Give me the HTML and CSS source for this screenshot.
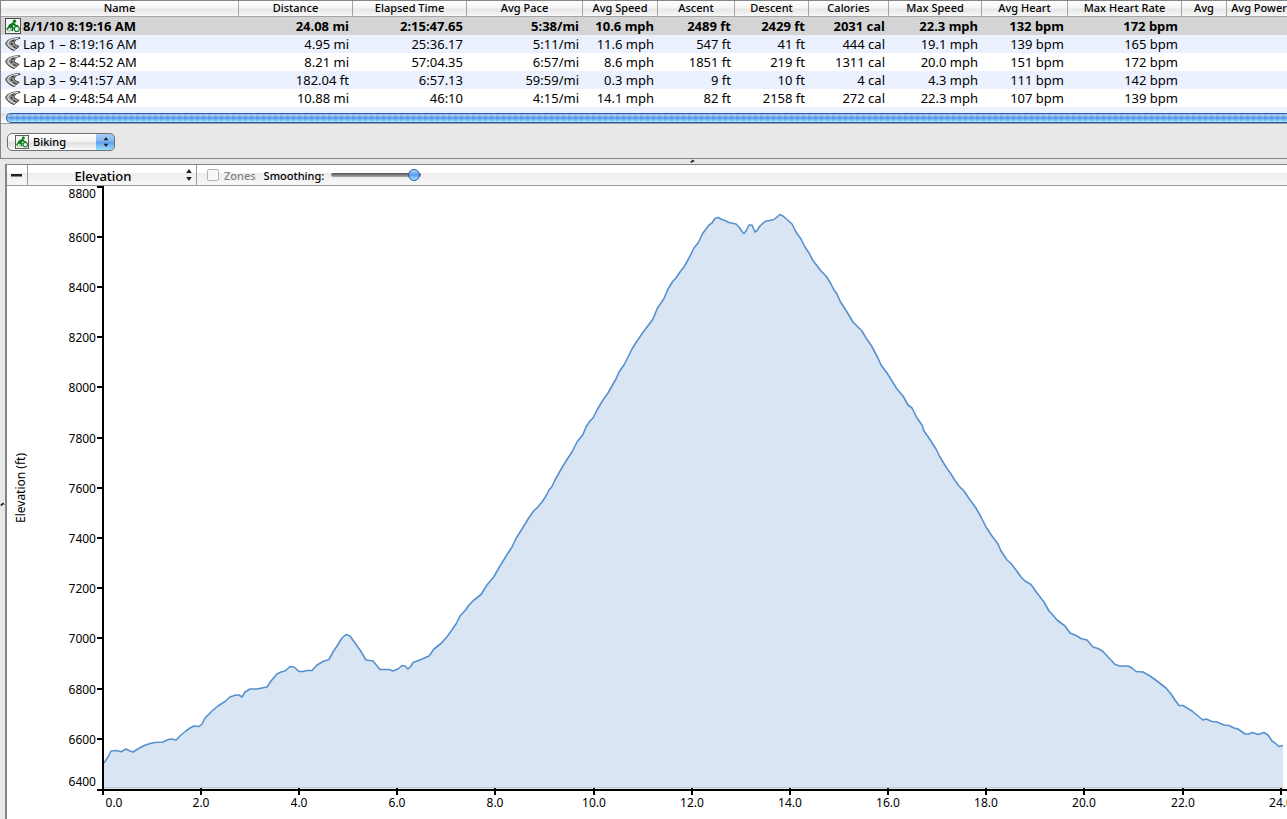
FILE: index.html
```html
<!DOCTYPE html>
<html lang="en">
<head>
<meta charset="utf-8">
<title>Activity – Elevation</title>
<link rel="stylesheet" href="styles.css">
</head>
<body>
<svg class="defs" aria-hidden="true">
  <symbol id="bike" viewBox="0 0 16 16">
    <rect x=".5" y=".5" width="15" height="15" fill="#f4f6f4" stroke="#4b4b4b"/>
    <circle cx="3.800" cy="11.200" r="2" fill="none" stroke="#7fba86"/>
    <circle cx="11.800" cy="11" r="2.500" fill="none" stroke="#167a24" stroke-width="1.200"/>
    <circle cx="9.500" cy="3.300" r="1.700" fill="#0d7a1c"/>
    <path d="M8 5.500 4.500 8.200M9 5.800l1.500 2 2 .2" fill="none" stroke="#0d7a1c" stroke-width="1.800" stroke-linecap="round"/>
    <path d="M8.300 4.500 4 6.500 3 9.200 7 9.500 9.200 6.500z" fill="#0d7a1c"/>
    <path d="M4.500 8.500 8 9.800 7 13M4 9l-2 2.500" fill="none" stroke="#0d7a1c" stroke-width="1.700"/>
  </symbol>
  <symbol id="road" viewBox="0 0 17 16">
    <path d="M16 1.500C10 1 3 3 1 6.500 0 9 4 13 9.500 15L15 10.500C11 9 9.500 7.500 10 6c.5-2 3-3.500 6-4z" fill="#8d8d8d" stroke="#3c3c3c"/>
    <path d="M14 2C8 2 3 4.500 3 7c0 2.200 4 5 8 6.800" fill="none" stroke="#dedede" stroke-width="1.200"/>
    <path d="M9.500 3.800 7 5.300M6.500 7l1.200 2M9 10.500l2 1.500" fill="none" stroke="#222" stroke-width="1.200"/>
  </symbol>
  <symbol id="updown" viewBox="0 0 6 12">
    <path d="M3 0 5.800 4H.2zM3 12 .2 8h5.600z" fill="#1c1c1c"/>
  </symbol>
</svg>

<section class="activity">
  <div class="table-view">
    <table class="laps">
      <colgroup><col class="c-name"><col class="c-114"><col class="c-114"><col class="c-pace"><col class="c-speed"><col class="c-ascent"><col class="c-descent"><col class="c-cal"><col class="c-max"><col class="c-heart"><col class="c-114"><col class="c-avg"><col class="c-power"></colgroup>
      <thead>
        <tr><th>Name</th><th>Distance</th><th>Elapsed Time</th><th>Avg Pace</th><th>Avg Speed</th><th>Ascent</th><th>Descent</th><th>Calories</th><th>Max Speed</th><th>Avg Heart</th><th>Max Heart Rate</th><th>Avg</th><th>Avg Power</th></tr>
      </thead>
      <tbody>
        <tr class="selected"><td><span class="name"><svg class="icon"><use href="#bike"/></svg>8/1/10 8:19:16 AM</span></td><td>24.08 mi</td><td>2:15:47.65</td><td>5:38/mi</td><td>10.6 mph</td><td>2489 ft</td><td>2429 ft</td><td>2031 cal</td><td>22.3 mph</td><td>132 bpm</td><td>172 bpm</td><td></td><td></td></tr>
        <tr><td><span class="name"><svg class="icon"><use href="#road"/></svg>Lap 1 – 8:19:16 AM</span></td><td>4.95 mi</td><td>25:36.17</td><td>5:11/mi</td><td>11.6 mph</td><td>547 ft</td><td>41 ft</td><td>444 cal</td><td>19.1 mph</td><td>139 bpm</td><td>165 bpm</td><td></td><td></td></tr>
        <tr><td><span class="name"><svg class="icon"><use href="#road"/></svg>Lap 2 – 8:44:52 AM</span></td><td>8.21 mi</td><td>57:04.35</td><td>6:57/mi</td><td>8.6 mph</td><td>1851 ft</td><td>219 ft</td><td>1311 cal</td><td>20.0 mph</td><td>151 bpm</td><td>172 bpm</td><td></td><td></td></tr>
        <tr><td><span class="name"><svg class="icon"><use href="#road"/></svg>Lap 3 – 9:41:57 AM</span></td><td>182.04 ft</td><td>6:57.13</td><td>59:59/mi</td><td>0.3 mph</td><td>9 ft</td><td>10 ft</td><td>4 cal</td><td>4.3 mph</td><td>111 bpm</td><td>142 bpm</td><td></td><td></td></tr>
        <tr><td><span class="name"><svg class="icon"><use href="#road"/></svg>Lap 4 – 9:48:54 AM</span></td><td>10.88 mi</td><td>46:10</td><td>4:15/mi</td><td>14.1 mph</td><td>82 ft</td><td>2158 ft</td><td>272 cal</td><td>22.3 mph</td><td>107 bpm</td><td>139 bpm</td><td></td><td></td></tr>
      </tbody>
    </table>
    <div class="blank-row"></div>
    <div class="scrollbar"><div class="scroll-thumb"></div></div>
  </div>
  <div class="sport-bar">
    <div class="popup">
      <select class="popup-select" aria-label="Activity type"><option>Biking</option></select>
      <svg class="popup-icon"><use href="#bike"/></svg>
      <svg class="popup-arrows"><use href="#updown"/></svg>
    </div>
  </div>
</section>

<div class="splitter"><svg class="grip" viewBox="0 0 5 4"><path d="M0 3 3 .5 5 2.500H3L2 4z" fill="#222"/></svg></div>

<div class="lower">
  <div class="side-splitter"><svg class="grip" viewBox="0 0 5 4"><path d="M0 3 3 .5 5 2.500H3L2 4z" fill="#222"/></svg></div>
  <section class="chart-panel">
    <div class="toolbar">
      <button class="collapse" aria-label="Collapse"><span class="minus"></span></button>
      <div class="metric">
        <select class="metric-select" aria-label="Metric"><option>Elevation</option></select>
        <svg class="metric-arrows"><use href="#updown"/></svg>
      </div>
      <div class="options">
        <label class="zones"><input class="check" type="checkbox" disabled>Zones</label>
        <label class="smoothing">Smoothing:<input class="slider" type="range" min="0" max="100" value="98"></label>
      </div>
    </div>
    <svg class="chart" viewBox="7 186 1280 633" role="img" aria-label="Elevation in feet by distance">
      <path class="area" d="M104 789V763L106 760 108 757 111 751 116 750.500 121 751.700 126 749 130 751 133 752 137 749.500 143 746 150 743.500 155 742.500 163 742 167 740 171 739 176 740 181 735 186 731 190 728 194 726 199 726.500 202 724 205 718 212 711 218 706 225 701.500 230 697 236 695 239 695 242 697 245 692 250 689 257 689 267 687 271 681 277 674 281 672 285 671 290 666.500 294 667 299 671.500 303 671.500 307 670.500 312 670.500 317 665 323 661.500 329 659.500 333 652 337 646 342 638 346 634.500 350 636 355 643 360 650 366 660 373 661 380 669.500 389 669.500 393 671 398 669 402 665.500 405 666 408 669 411 666 413 662.500 421 659.500 429 656 434 649 441 643.500 448 635.500 456 624 460 616 466 609.500 469 605 474 600 481 594.500 487 585 494 576.500 500 566 508 553 512 547 516 538.500 522 529 529 517.500 534 510.500 537 508 542 502 546 496 549 490 552 486.500 555 480 559 473 563 466 568 458 572 452 577 442 583 434.500 586 427 590 421 593 418 597 410 603 400 608 393 616 379 619 372 624 365 629 355 632 349 637 341 644 331 653 319 657 309 664 298.500 668 289 673 281 676 278 680 272 684 267 689 258 694 248 698 243 703 233 709 225 712 223 715 218.500 718 217.500 722 219.500 725 220.500 729 222.500 736 224 739 227 742 231.500 744 233.500 746 231 749 225 752 225 755 232 757 230.500 760 226 765 221.500 774 219.500 777 217 780 214.500 783 216 787 219.500 792 224 796 232 801 239 805 247 809 253 813 260.500 821 271 826 276 831 284 834 290 837 294 840 301 847 312 853 322 862 331 866 338 871 345 878 358 881 365 887 373 897 389 903 396 908 405 912 408 917 418 922 425 924 431 929 438 936 449 940 457 946 467 951 474 954 479 959 486 964 491 970 500 976 508 981 517 986 527 992 536 998 544 1001 551 1007 560 1011 563.500 1016 570 1021 577 1025 581 1031 584.500 1037 593 1044 602 1049 611 1052 614 1057 620 1065 626 1070 633 1076 635.500 1081 638.500 1087 640 1093 647 1098 648.500 1103 651.500 1108 657 1111 660 1115 664.500 1120 666 1128 666 1132 668 1136 671.500 1143 672 1150 676 1157 681 1166 688 1171 694 1175 700 1179 705.500 1183 705.500 1187 708 1192 711 1198 716 1203 720 1206 719 1212 721.500 1217 722 1224 725 1229 725.500 1234 728 1238 729 1245 734 1249 734 1252 732.500 1258 734.500 1264 732.500 1268 735 1272 741 1275 743 1279 746.500 1283 745.500V789z"/>
      <path class="line" d="M104 763L106 760 108 757 111 751 116 750.500 121 751.700 126 749 130 751 133 752 137 749.500 143 746 150 743.500 155 742.500 163 742 167 740 171 739 176 740 181 735 186 731 190 728 194 726 199 726.500 202 724 205 718 212 711 218 706 225 701.500 230 697 236 695 239 695 242 697 245 692 250 689 257 689 267 687 271 681 277 674 281 672 285 671 290 666.500 294 667 299 671.500 303 671.500 307 670.500 312 670.500 317 665 323 661.500 329 659.500 333 652 337 646 342 638 346 634.500 350 636 355 643 360 650 366 660 373 661 380 669.500 389 669.500 393 671 398 669 402 665.500 405 666 408 669 411 666 413 662.500 421 659.500 429 656 434 649 441 643.500 448 635.500 456 624 460 616 466 609.500 469 605 474 600 481 594.500 487 585 494 576.500 500 566 508 553 512 547 516 538.500 522 529 529 517.500 534 510.500 537 508 542 502 546 496 549 490 552 486.500 555 480 559 473 563 466 568 458 572 452 577 442 583 434.500 586 427 590 421 593 418 597 410 603 400 608 393 616 379 619 372 624 365 629 355 632 349 637 341 644 331 653 319 657 309 664 298.500 668 289 673 281 676 278 680 272 684 267 689 258 694 248 698 243 703 233 709 225 712 223 715 218.500 718 217.500 722 219.500 725 220.500 729 222.500 736 224 739 227 742 231.500 744 233.500 746 231 749 225 752 225 755 232 757 230.500 760 226 765 221.500 774 219.500 777 217 780 214.500 783 216 787 219.500 792 224 796 232 801 239 805 247 809 253 813 260.500 821 271 826 276 831 284 834 290 837 294 840 301 847 312 853 322 862 331 866 338 871 345 878 358 881 365 887 373 897 389 903 396 908 405 912 408 917 418 922 425 924 431 929 438 936 449 940 457 946 467 951 474 954 479 959 486 964 491 970 500 976 508 981 517 986 527 992 536 998 544 1001 551 1007 560 1011 563.500 1016 570 1021 577 1025 581 1031 584.500 1037 593 1044 602 1049 611 1052 614 1057 620 1065 626 1070 633 1076 635.500 1081 638.500 1087 640 1093 647 1098 648.500 1103 651.500 1108 657 1111 660 1115 664.500 1120 666 1128 666 1132 668 1136 671.500 1143 672 1150 676 1157 681 1166 688 1171 694 1175 700 1179 705.500 1183 705.500 1187 708 1192 711 1198 716 1203 720 1206 719 1212 721.500 1217 722 1224 725 1229 725.500 1234 728 1238 729 1245 734 1249 734 1252 732.500 1258 734.500 1264 732.500 1268 735 1272 741 1275 743 1279 746.500 1283 745.500"/>
      <path class="baseline" d="M104 787.500H1283"/>
      <path class="axis" d="M103 186V795M97 790H1287"/>
      <path class="ticks" d="M97 187H103M97 237H103M97 287H103M97 337H103M97 387H103M97 438H103M97 488H103M97 538H103M97 588H103M97 638H103M97 689H103M97 739H103M201 788V795M299 788V795M397 788V795M495 788V795M594 788V795M692 788V795M790 788V795M888 788V795M986 788V795M1084 788V795M1183 788V795M1281 788V795"/>
      <g class="y-labels">
        <text x="96" y="198">8800</text><text x="96" y="242">8600</text><text x="96" y="292">8400</text><text x="96" y="342">8200</text><text x="96" y="392">8000</text><text x="96" y="443">7800</text><text x="96" y="493">7600</text><text x="96" y="543">7400</text><text x="96" y="593">7200</text><text x="96" y="643">7000</text><text x="96" y="694">6800</text><text x="96" y="744">6600</text><text x="96" y="786">6400</text>
      </g>
      <g class="x-labels">
        <text x="114" y="807">0.0</text><text x="201" y="807">2.0</text><text x="299" y="807">4.0</text><text x="397" y="807">6.0</text><text x="495" y="807">8.0</text><text x="594" y="807">10.0</text><text x="692" y="807">12.0</text><text x="790" y="807">14.0</text><text x="888" y="807">16.0</text><text x="986" y="807">18.0</text><text x="1084" y="807">20.0</text><text x="1183" y="807">22.0</text><text x="1281" y="807">24.0</text>
        <text transform="translate(25 488) rotate(-90)">Elevation (ft)</text>
      </g>
    </svg>
  </section>
</div>
</body>
</html>
```
FILE: styles.css
```css
* { box-sizing: border-box; }
body {
  margin: 0;
  overflow: hidden;
  background: #e8e8e8;
  color: #000;
  font-family: "Noto Sans", "Open Sans", sans-serif;
  font-size: 13px;
}
svg { display: block; }
.defs { position: absolute; width: 0; height: 0; }

.activity {
  border: 1px solid #858585;
  border-right: 0;
}
.table-view { overflow: hidden; background: #fff; }
.laps {
  width: 100%;
  min-width: 1291px;
  table-layout: fixed;
  border-collapse: separate;
  border-spacing: 0;
}
.c-name { width: 238px; }
.c-114 { width: 114px; }
.c-pace { width: 116px; }
.c-speed { width: 75px; }
.c-ascent { width: 77px; }
.c-descent { width: 74px; }
.c-cal { width: 80px; }
.c-max { width: 93px; }
.c-heart { width: 86px; }
.c-avg { width: 45px; }
.c-power { width: auto; }
.laps th {
  height: 16px;
  padding: 0 0 2px;
  border-right: 1px solid #a5a5a5;
  border-bottom: 1px solid #a5a5a5;
  background: linear-gradient(#fff 0%, #f6f6f6 45%, #e6e6e6 55%, #f8f8f8 100%);
  font-size: 11px;
  font-weight: 500;
  line-height: 13px;
  white-space: nowrap;
}
.laps td {
  height: 18px;
  padding: 0 4px 0 0;
  line-height: 18px;
  text-align: right;
  white-space: nowrap;
}
.laps tbody tr:nth-child(even) { background: #ebf1fe; }
.laps .selected { background: #d4d4d4; font-weight: 700; }
.name { display: flex; align-items: center; gap: 2px; padding-left: 4px; }
.icon { width: 16px; height: 16px; }
.blank-row { height: 6px; background: #ebf1fe; }
.scrollbar {
  height: 10px;
  padding-left: 5px;
  background: linear-gradient(#ddd, #fff);
}
.scroll-thumb {
  height: 10px;
  border: 1px solid #2a5caa;
  border-right: 0;
  border-radius: 5px 0 0 5px;
  background:
    repeating-linear-gradient(90deg, rgba(255, 255, 255, .1) 0 3px, rgba(0, 60, 160, .06) 3px 6px),
    linear-gradient(#8fb8ec 0%, #a5c8f4 20%, #5796e6 45%, #69b1f5 65%, #a6ecff 100%);
}
.sport-bar {
  padding: 9px 6px 7px;
  border-top: 1px solid #9c9c9c;
}
.popup { position: relative; width: 108px; }
.popup-select {
  display: block;
  width: 100%;
  height: 18px;
  padding: 0 20px 0 25px;
  appearance: none;
  border: 1px solid #6f6f6f;
  border-radius: 5px;
  background:
    linear-gradient(#a9cdf5 0%, #82b5ef 45%, #5ba0ec 50%, #9be0fd 100%) right / 18px 100% no-repeat,
    linear-gradient(#fff 0%, #f3f3f3 45%, #dfdfdf 55%, #fafafa 100%);
  color: #000;
  font: 500 11px/16px "Noto Sans", "Open Sans", sans-serif;
}
.popup-icon { position: absolute; left: 8px; top: 2px; width: 14px; height: 14px; }
.popup-arrows { position: absolute; right: 6px; top: 4px; width: 6px; height: 10px; pointer-events: none; }

.splitter { display: flex; justify-content: center; height: 5px; padding-left: 98px; }
.grip { width: 5px; height: 4px; }
.lower { display: flex; }
.side-splitter { display: flex; align-items: center; width: 5px; padding-top: 24px; }
.chart-panel {
  flex: 1;
  min-width: 0;
  border-top: 1px solid #858585;
  border-left: 2px solid #858585;
  background: #fff;
}
.toolbar {
  display: flex;
  height: 21px;
  border-bottom: 1px solid #999;
  background: linear-gradient(#fff 0 8px, #ececec 8px, #f8f8f8 100%);
}
.collapse {
  display: flex;
  align-items: center;
  justify-content: center;
  width: 21px;
  padding: 0 1px 0 0;
  border: 0;
  border-right: 1px solid #999;
  background: none;
}
.minus { width: 11px; height: 3px; background: #222; border-bottom: 1px solid #888; }
.metric { position: relative; width: 169px; border-right: 1px solid #999; }
.metric-select {
  width: 100%;
  height: 20px;
  padding: 2px 18px 0 0;
  appearance: none;
  border: 0;
  background: none;
  color: #000;
  font: 500 13px/18px "Noto Sans", "Open Sans", sans-serif;
  text-align-last: center;
}
.metric-arrows { position: absolute; right: 4px; top: 4px; width: 6px; height: 12px; pointer-events: none; }
.options { display: flex; align-items: center; gap: 8px; padding-left: 10px; font-size: 11px; font-weight: 500; }
.zones, .smoothing { display: flex; align-items: center; }
.zones { gap: 5px; color: #808080; }
.smoothing { gap: 7px; }
.check {
  width: 12px;
  height: 12px;
  margin: 0;
  appearance: none;
  border: 1px solid #b4b4b4;
  border-radius: 2px;
  background: #f7f7f7;
}
.slider { width: 90px; height: 14px; margin: 0; appearance: none; background: none; }
.slider::-webkit-slider-runnable-track {
  height: 4px;
  border-radius: 2px;
  background: linear-gradient(#555, #aaa);
}
.slider::-webkit-slider-thumb {
  width: 12px;
  height: 12px;
  margin-top: -4px;
  appearance: none;
  border: 1px solid #2c5aa0;
  border-radius: 50%;
  background: linear-gradient(#b5d4f8, #5a9cf0 50%, #a8e4ff);
}

.chart { width: 100%; height: auto; }
.area { fill: #dae5f3; }
.line { fill: none; stroke: #5691cf; stroke-width: 1.6px; stroke-linejoin: round; }
.baseline { fill: none; stroke: #c5c9d0; }
.axis { fill: none; stroke: #000; stroke-width: 2px; }
.ticks { fill: none; stroke: #000; stroke-width: 2px; }
.y-labels, .x-labels { font-size: 12px; }
.y-labels { text-anchor: end; }
.x-labels { text-anchor: middle; }
```
